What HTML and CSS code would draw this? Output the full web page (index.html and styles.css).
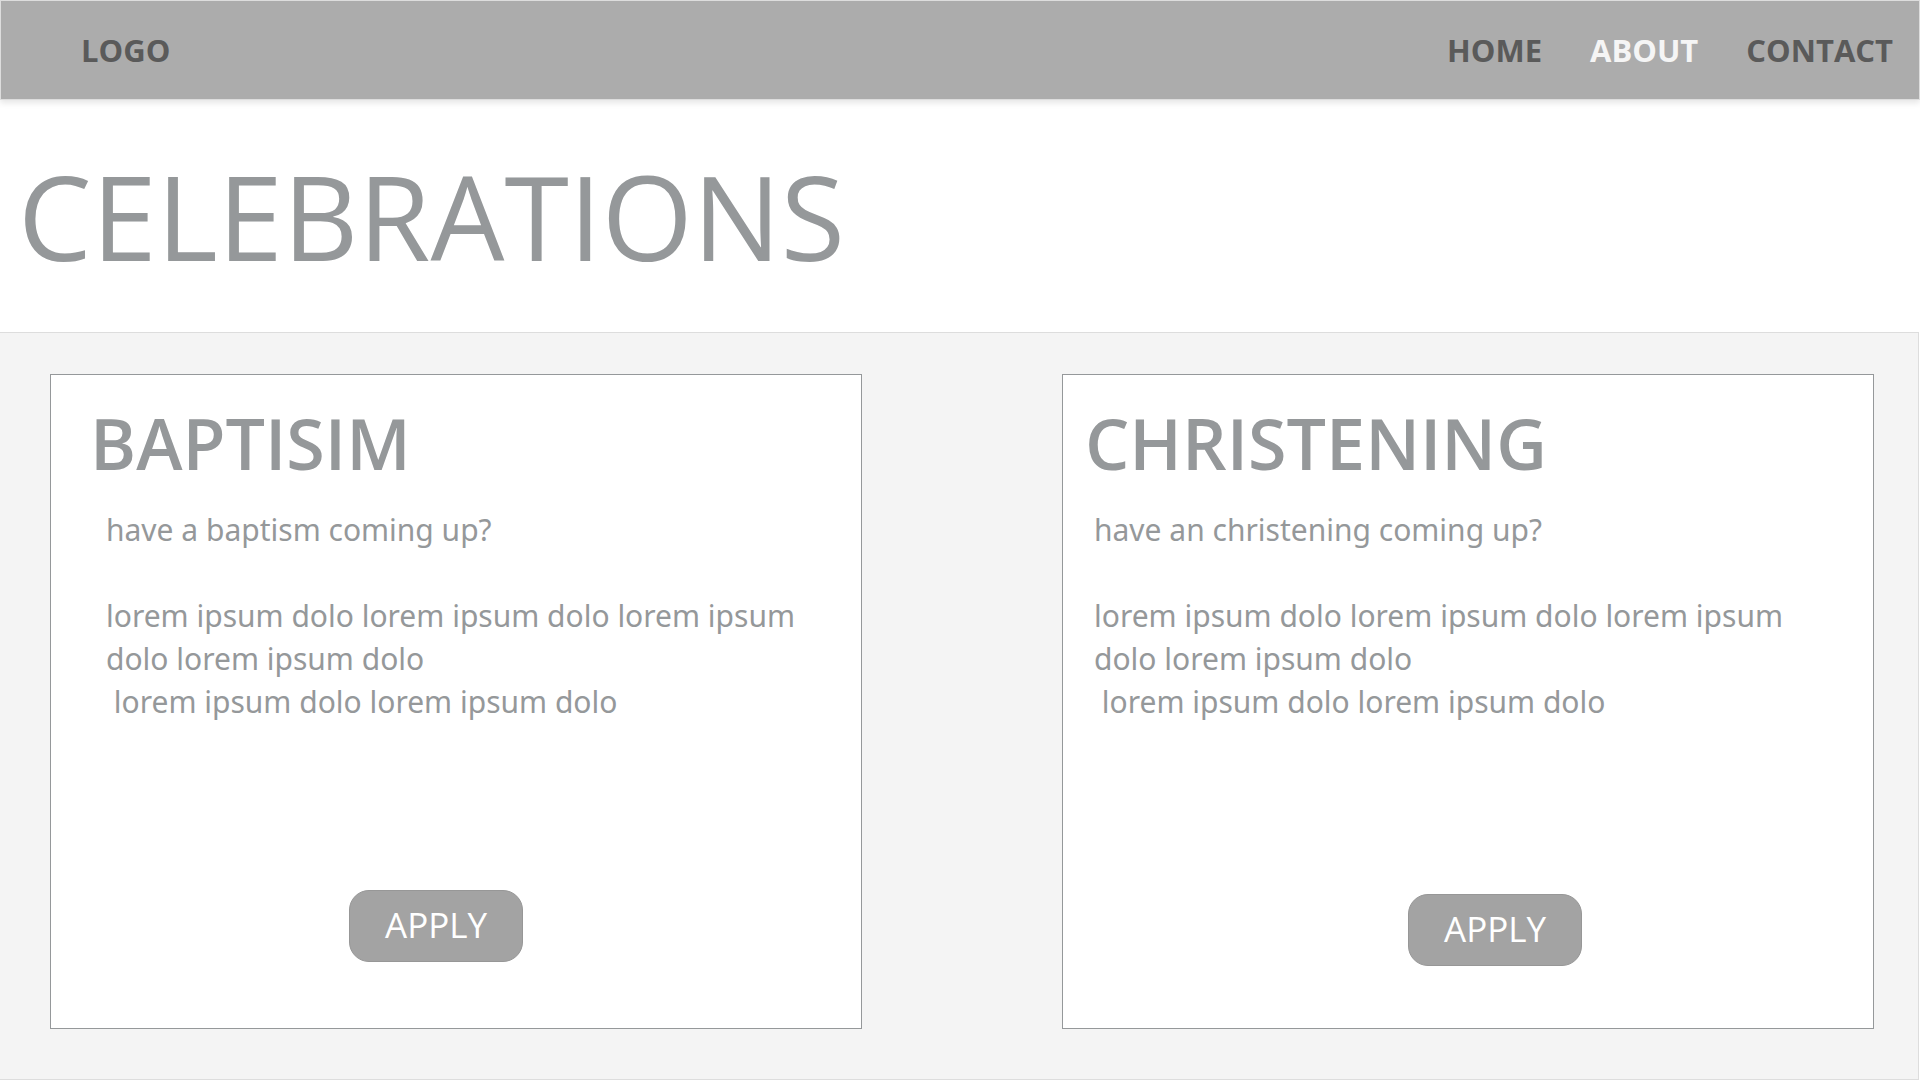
FILE: index.html
```html
<!DOCTYPE html>
<html lang="en">
<head>
  <meta charset="utf-8">
  <meta name="viewport" content="width=device-width, initial-scale=1">
  <title>Celebrations</title>
  <link rel="stylesheet" href="styles.css">
</head>
<body>
  <header class="site-header">
    <a class="site-link" href="#">LOGO</a>
    <nav class="site-nav">
      <a class="site-link" href="#">HOME</a>
      <a class="site-link site-link--active" href="#" aria-current="page">ABOUT</a>
      <a class="site-link" href="#">CONTACT</a>
    </nav>
  </header>
  <main class="page">
    <div class="hero">
      <h1 class="hero-title">CELEBRATIONS</h1>
    </div>
    <section class="events">
      <article class="card card--baptism">
        <h2 class="card-title">BAPTISIM</h2>
        <div class="card-text">
          <p>have a baptism coming up?</p>
          <p>lorem ipsum dolo lorem ipsum dolo lorem ipsum dolo lorem ipsum dolo<br>&nbsp;lorem ipsum dolo lorem ipsum dolo</p>
        </div>
        <button class="apply" type="button">APPLY</button>
      </article>
      <article class="card card--christening">
        <h2 class="card-title">CHRISTENING</h2>
        <div class="card-text">
          <p>have an christening coming up?</p>
          <p>lorem ipsum dolo lorem ipsum dolo lorem ipsum dolo lorem ipsum dolo<br>&nbsp;lorem ipsum dolo lorem ipsum dolo</p>
        </div>
        <button class="apply" type="button">APPLY</button>
      </article>
    </section>
  </main>
</body>
</html>
```
FILE: styles.css
```css
*,
*::before,
*::after {
  box-sizing: border-box;
}

body {
  margin: 0;
  min-height: 100vh;
  display: flex;
  flex-direction: column;
  background: #fff;
  color: #95989a;
  font-family: "Open Sans", "Noto Sans", sans-serif;
}

h1,
h2,
p {
  margin: 0;
}

.site-header {
  display: flex;
  justify-content: space-between;
  align-items: center;
  padding: 28px 26px 28px 80px;
  border: 1px solid #ddd;
  background: #acacac;
  box-shadow: 0 3px 6px rgba(0, 0, 0, 0.1);
}

.site-nav {
  display: flex;
  gap: 48px;
}

.site-link {
  color: #5a5a5a;
  font-size: 31px;
  font-weight: 700;
  line-height: 42px;
  text-decoration: none;
}

.site-link--active {
  color: #f5f5f5;
}

.page {
  flex: 1;
  display: flex;
  flex-direction: column;
}

.hero {
  padding: 36px 18px;
}

.hero-title {
  font-size: 117px;
  font-weight: 400;
  line-height: 160px;
}

.events {
  flex: 1;
  display: grid;
  grid-template-columns: 1fr 1fr;
  gap: 200px;
  margin-right: 1px;
  padding: 41px 44px 50px 50px;
  border: 1px solid #ddd;
  border-left: 0;
  background: #f4f4f4;
}

.card {
  display: flex;
  flex-direction: column;
  align-items: flex-start;
  padding: 20px 20px 66px 39px;
  border: 1px solid #95989a;
  background: #fff;
}

.card--christening {
  padding-left: 22px;
  padding-bottom: 62px;
}

.card-title {
  font-size: 70px;
  font-weight: 600;
  line-height: 96px;
}

.card-text {
  display: flex;
  flex-direction: column;
  gap: 43px;
  max-width: 720px;
  margin: 17px 0 43px 16px;
  font-family: "Noto Sans", "Open Sans", sans-serif;
  font-size: 30px;
  line-height: 43px;
}

.card--christening .card-text {
  margin-left: 9px;
}

.apply {
  margin: auto 0 0 259px;
  padding: 10px 35px 12px;
  border: 1px solid #979797;
  border-radius: 20px;
  background: #a3a3a3;
  color: #fff;
  font-family: inherit;
  font-size: 35px;
  line-height: 48px;
}

.card--christening .apply {
  margin-left: 323px;
}
```
